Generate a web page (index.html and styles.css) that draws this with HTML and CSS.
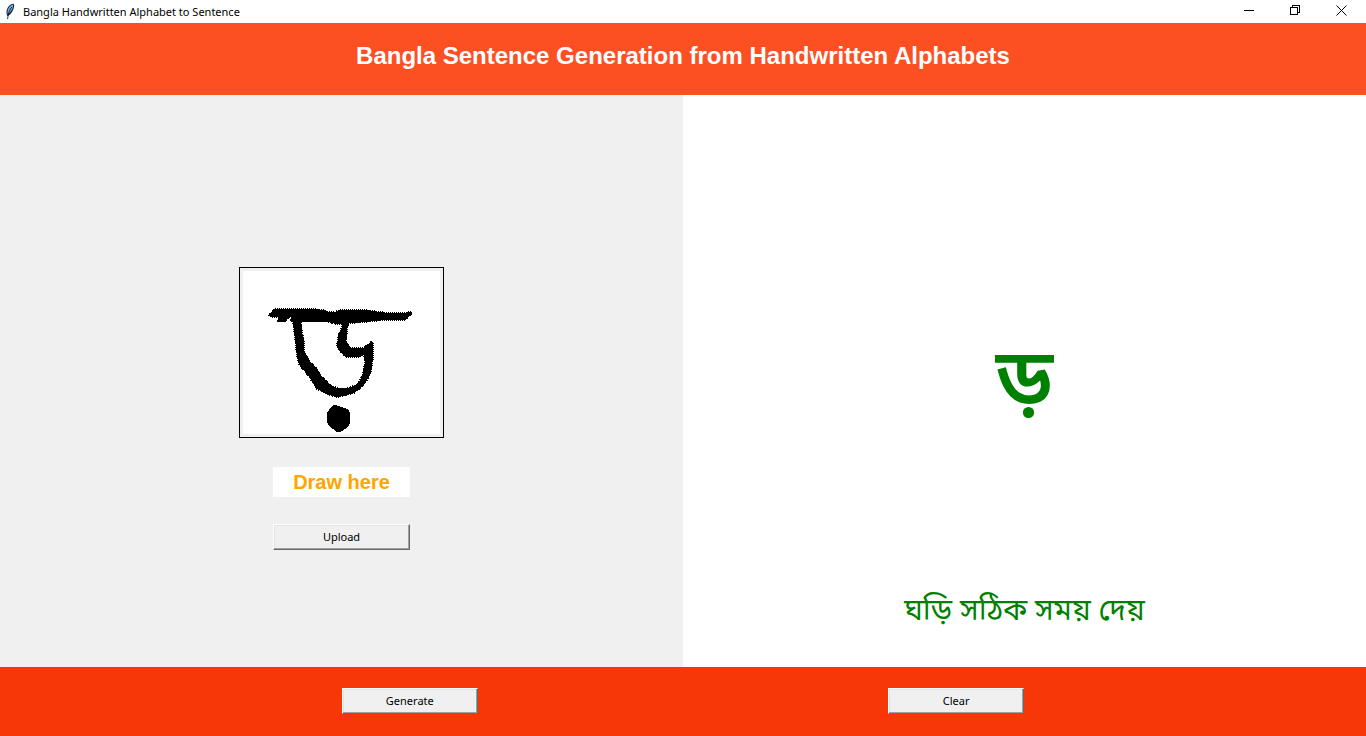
FILE: index.html
```html
<!DOCTYPE html>
<html lang="en">
<head>
<meta charset="utf-8">
<title>Bangla Handwritten Alphabet to Sentence</title>
<link rel="stylesheet" href="styles.css">
</head>
<body>
<div class="titlebar">
  <svg class="feather" viewBox="0 0 10 17" aria-hidden="true">
    <path d="M2.400 13C.8 10 1.400 5.600 4 3 5.800 1.200 8 .4 8.800 1c.7 1 .4 3.200-.4 5.200C7.400 9 5.200 11.800 3.300 12.800Z" fill="#1b2b3c"/>
    <path d="M2.600 11C2.200 8 3 5.300 5 3.300 6.100 2.200 7.500 1.400 8.100 1.700c.3 1-.3 3.200-1.300 5.100C5.900 8.600 4.200 10.300 2.600 11Z" fill="#78aee6"/>
    <path d="M6.800 4C5 6.500 3.300 9.500 2.600 16" fill="none" stroke="#101820" stroke-width=".9"/>
  </svg>
  <span class="caption">Bangla Handwritten Alphabet to Sentence</span>
  <div class="window-controls">
    <button type="button" class="window-button" aria-label="Minimize"><svg viewBox="0 0 11 11" shape-rendering="crispEdges"><path d="M0 5h10v1H0z"/></svg></button>
    <button type="button" class="window-button" aria-label="Restore"><svg viewBox="0 0 11 11" fill="none" stroke="#000" shape-rendering="crispEdges"><path d="M.5 2.500h7v7h-7zM2.500 2.500v-2h7v7h-2"/></svg></button>
    <button type="button" class="window-button" aria-label="Close"><svg viewBox="0 0 11 11" fill="none" stroke="#000"><path d="M.5.5l10 10M10.500.5l-10 10"/></svg></button>
  </div>
</div>
<header class="banner"><h1>Bangla Sentence Generation from Handwritten Alphabets</h1></header>
<main class="workspace">
  <section class="input-pane">
    <div class="canvas">
      <svg class="drawing" viewBox="39 33 591 489" role="img" aria-label="Handwritten letter" shape-rendering="crispEdges">
        <g fill="#000" stroke="#000" stroke-width="4" stroke-dasharray="3 3">
          <path d="M135 146H250L285 151 298 156H315L325 151 350 149H400L430 153 470 158H530L541 154 547 160 527 181H455L400 187 357 190 352 205 349 245 361 264H400L424 244 430 250V290L425 325 419 348 402 375 375 398 345 407 320 412 285 400 260 387 237 351 207 313 201 290 195 240 189 188 185 182H179L184 173 180 172 163 185H140L147 173 139 171H123L116 166ZM214 185 216 215 221 235 224 278 240 305 258 323 275 348 300 375 325 385H350L382 373 390 360 397 345 404 310 402 283 387 291H346L320 262 325 225 339 192H317L292 185Z"/>
        </g>
        <path d="M307 437 318 435 354 448 360 457V491L350 505 331 515H320L298 499 291 487V458Z"/>
      </svg>
    </div>
    <p class="hint">Draw here</p>
    <button type="button" class="button upload">Upload</button>
  </section>
  <section class="output-pane" lang="bn">
    <output class="letter">ড়</output>
    <output class="sentence">ঘড়ি সঠিক সময় দেয়</output>
  </section>
</main>
<footer class="actions">
  <button type="button" class="button generate">Generate</button>
  <button type="button" class="button clear">Clear</button>
</footer>
</body>
</html>
```
FILE: styles.css
```css
* { box-sizing: border-box; }

body {
  margin: 0;
  min-height: 100vh;
  display: flex;
  flex-direction: column;
  background: #fff;
  color: #000;
  font-family: "Noto Sans", "Open Sans", sans-serif;
  font-size: 11px;
}

.titlebar {
  display: flex;
  align-items: center;
  height: 23px;
  padding: 0 2px 0 5px;
}

.feather { width: 10px; height: 17px; margin-right: 8px; }

.caption { line-height: 16px; }

.window-controls { display: flex; align-self: flex-start; margin-left: auto; }

.window-button {
  display: flex;
  align-items: center;
  justify-content: center;
  width: 46px;
  height: 21px;
  padding: 0;
  border: 0;
  background: transparent;
}

.window-button svg { width: 11px; height: 11px; }

.banner {
  padding: 18px 16px 24px;
  background: #fc5023;
  color: #fff;
  text-align: center;
}

.banner h1 {
  margin: 0;
  font: bold 24px/30px "Liberation Sans", Arial, sans-serif;
}

.workspace {
  flex: 1;
  display: grid;
  grid-template-columns: 1fr 1fr;
}

.input-pane {
  display: flex;
  flex-direction: column;
  align-items: center;
  justify-content: center;
  padding-top: 54px;
  background: #f0f0f0;
}

.canvas {
  padding: 3px;
  border: 1px solid #000;
}

.drawing {
  display: block;
  width: 197px;
  height: 163px;
  background: #fff;
}

.hint {
  width: 20%;
  margin: 29px 0 27px;
  background: #fff;
  color: #ffa500;
  font: bold 20px/30px "Liberation Sans", Arial, sans-serif;
  text-align: center;
}

.button {
  height: 26px;
  padding: 0;
  border: 1px solid;
  border-color: #fff #696969 #696969 #fff;
  background: #f0f0f0;
  box-shadow: inset -1px -1px #a0a0a0, inset 1px 1px #e3e3e3;
  color: #000;
  font: 11px/16px "Noto Sans", "Open Sans", sans-serif;
}

.upload { width: 20%; }

.output-pane {
  display: flex;
  flex-direction: column;
  align-items: center;
  justify-content: flex-end;
  padding-bottom: 31px;
  color: #008000;
  font-family: "Noto Sans Bengali", sans-serif;
}

.letter { font-size: 80px; font-weight: 600; line-height: 120px; }

.sentence {
  margin-top: 143px;
  font-size: 30px;
  font-weight: 400;
  line-height: 48px;
}

.actions {
  display: grid;
  grid-template-columns: 25% 10% 30% 10%;
  padding: 21px 0 22px;
  background: #f83708;
}

.generate { grid-column: 2; }

.clear { grid-column: 4; }
```
